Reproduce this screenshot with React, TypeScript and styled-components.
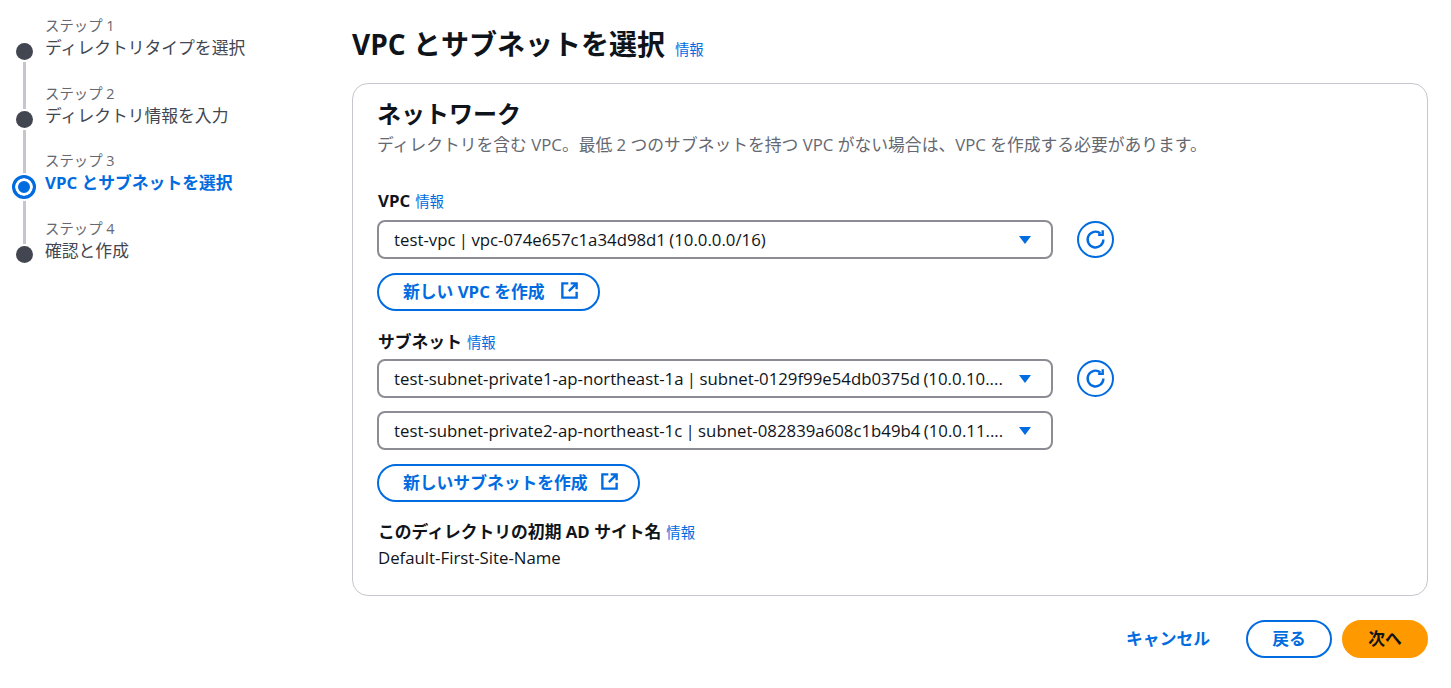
import React from "react";
import styled, { createGlobalStyle } from "styled-components";

const GlobalStyle = createGlobalStyle`
  html, body {
    margin: 0;
    padding: 0;
    background: #fff;
    font-family: "Open Sans", "Noto Sans CJK JP", sans-serif;
    color: #0f141a;
  }
`;

const Page = styled.div`
  width: 1451px;
  height: 688px;
  box-sizing: border-box;
  overflow: hidden;
  display: flex;
  padding: 17px 23px 0 12px;
`;

const Sidebar = styled.nav`
  width: 340px;
  flex: none;
  display: flex;
  flex-direction: column;
`;

const StepRow = styled.div`
  height: 67.5px;
  display: flex;
  gap: 9px;
`;

const Rail = styled.div`
  width: 24px;
  display: flex;
  flex-direction: column;
  align-items: center;
`;

const RailLine = styled.span<{ $height: number; $hidden?: boolean }>`
  width: 3px;
  height: ${(p) => p.$height}px;
  flex: ${(p) => (p.$height ? "none" : "1")};
  background: ${(p) => (p.$hidden ? "transparent" : "#c6c6cd")};
`;

const Dot = styled.span<{ $active?: boolean }>`
  box-sizing: border-box;
  flex: none;
  border-radius: 50%;
  position: relative;
  z-index: 1;
  width: ${(p) => (p.$active ? 24 : 17)}px;
  height: ${(p) => (p.$active ? 24 : 17)}px;
  background: ${(p) => (p.$active ? "#006ce0" : "#424650")};
  margin: ${(p) => (p.$active ? "-1.5px 0" : "2px 0")};
  ${(p) => p.$active && "border: 3px solid #006ce0; box-shadow: inset 0 0 0 3px #fff, 0 0 0 2px #fff;"}
`;

const StepText = styled.div`
  display: flex;
  flex-direction: column;
`;

const StepLabel = styled.span`
  font-size: 14.4px;
  line-height: 18px;
  color: #656871;
`;

const StepTitle = styled.span<{ $active?: boolean }>`
  font-size: 16.8px;
  line-height: 25px;
  color: ${(p) => (p.$active ? "#006ce0" : "#424650")};
  font-weight: ${(p) => (p.$active ? 700 : 400)};
`;

const Main = styled.main`
  flex: 1;
  display: flex;
  flex-direction: column;
`;

const HeadingRow = styled.div`
  display: flex;
  align-items: baseline;
  gap: 10px;
  height: 66px;
  padding-top: 7px;
  box-sizing: border-box;
`;

const Heading = styled.h1`
  margin: 0;
  font-size: 28px;
  line-height: 40px;
  font-weight: 700;
`;

const InfoLink = styled.a`
  font-size: 14.4px;
  font-weight: 400;
  color: #006ce0;
`;

const Card = styled.section`
  box-sizing: border-box;
  height: 513px;
  border: 1px solid #c6c6cd;
  border-radius: 16px;
  padding: 12px 24px 0;
  display: flex;
  flex-direction: column;
`;

const CardTitle = styled.h2`
  margin: 0 0 2px;
  font-size: 24px;
  line-height: 36px;
  font-weight: 700;
`;

const CardDescription = styled.p`
  margin: 0 0 35px;
  font-size: 16.8px;
  line-height: 21px;
  color: #656871;
`;

const FieldLabel = styled.div<{ $gap: number }>`
  display: flex;
  align-items: baseline;
  gap: 5px;
  padding-left: 1px;
  font-size: 16.8px;
  line-height: 22px;
  font-weight: 700;
  margin-bottom: ${(p) => p.$gap}px;
`;

const SelectRow = styled.div<{ $gap: number }>`
  display: flex;
  align-items: center;
  gap: 24px;
  margin-bottom: ${(p) => p.$gap}px;
`;

const Select = styled.div`
  box-sizing: border-box;
  width: 676px;
  height: 39px;
  border: 2px solid #8c8c94;
  border-radius: 8px;
  padding: 0 19px 0 15px;
  display: flex;
  align-items: center;
  justify-content: space-between;
  font-size: 16.8px;
  word-spacing: -1px;
  white-space: nowrap;
`;

const RefreshButton = styled.button`
  box-sizing: border-box;
  width: 37px;
  height: 37px;
  padding: 0;
  border: 2px solid #006ce0;
  border-radius: 50%;
  background: #fff;
  display: flex;
  align-items: center;
  justify-content: center;
`;

const PillButton = styled.button<{ $primary?: boolean; $withIcon?: boolean; $iconGap?: number }>`
  box-sizing: border-box;
  height: 38px;
  min-width: 86px;
  justify-content: center;
  padding: 0 ${(p) => (p.$withIcon ? 19 : 24)}px 3px 24px;
  border: 2px solid ${(p) => (p.$primary ? "#ff9900" : "#006ce0")};
  border-radius: 19px;
  background: ${(p) => (p.$primary ? "#ff9900" : "#fff")};
  color: ${(p) => (p.$primary ? "#0f141a" : "#006ce0")};
  font: 700 16.8px "Open Sans", "Noto Sans CJK JP", sans-serif;
  display: inline-flex;
  align-items: center;
  gap: ${(p) => p.$iconGap ?? 0}px;
`;

const CreateRow = styled.div<{ $gap: number }>`
  display: flex;
  margin-bottom: ${(p) => p.$gap}px;
`;

const SiteName = styled.div`
  padding-left: 1px;
  font-size: 16.8px;
  line-height: 22px;
`;

const Footer = styled.footer`
  display: flex;
  justify-content: flex-end;
  align-items: center;
  gap: 10px;
  margin-top: 24px;
`;

const CancelLink = styled.a`
  color: #006ce0;
  font-size: 16.8px;
  font-weight: 700;
  margin: 0 26px 3px 0;
`;

const steps = [
  { label: "ステップ 1", title: "ディレクトリタイプを選択" },
  { label: "ステップ 2", title: "ディレクトリ情報を入力" },
  { label: "ステップ 3", title: "VPC とサブネットを選択", active: true },
  { label: "ステップ 4", title: "確認と作成" },
];

const ExternalIcon = () => (
  <svg width="19" height="19" viewBox="0 0 16 16" fill="none" stroke="currentColor" strokeWidth="2">
    <path d="M7 2H2v12h12V9" />
    <path d="M9 2h5v5M14 2 7.5 8.5" />
  </svg>
);

const RefreshIcon = () => (
  <svg width="21" height="21" viewBox="0 0 16 16" fill="none" stroke="#006ce0" strokeWidth="1.8">
    <path d="M14 8a6 6 0 1 1-2.2-4.6" />
    <path d="M13.5 1v3.5H10" />
  </svg>
);

const CaretIcon = () => (
  <svg width="14" height="10" viewBox="0 0 14 10">
    <path d="M1 1h12L7 9z" fill="#006ce0" />
  </svg>
);

const App = () => (
  <>
    <GlobalStyle />
    <Page>
      <Sidebar>
        {steps.map((step, i) => (
          <StepRow key={step.label}>
            <Rail>
              <RailLine $height={24} $hidden={i === 0} />
              <Dot $active={step.active} />
              <RailLine $height={0} $hidden={i === steps.length - 1} />
            </Rail>
            <StepText>
              <StepLabel>{step.label}</StepLabel>
              <StepTitle $active={step.active}>{step.title}</StepTitle>
            </StepText>
          </StepRow>
        ))}
      </Sidebar>
      <Main>
        <HeadingRow>
          <Heading>VPC とサブネットを選択</Heading>
          <InfoLink>情報</InfoLink>
        </HeadingRow>
        <Card>
          <CardTitle>ネットワーク</CardTitle>
          <CardDescription>
            ディレクトリを含む VPC。最低 2 つのサブネットを持つ VPC がない場合は、VPC を作成する必要があります。
          </CardDescription>

          <FieldLabel $gap={7}>
            VPC <InfoLink>情報</InfoLink>
          </FieldLabel>
          <SelectRow $gap={14}>
            <Select>
              test-vpc | vpc-074e657c1a34d98d1 (10.0.0.0/16)
              <CaretIcon />
            </Select>
            <RefreshButton>
              <RefreshIcon />
            </RefreshButton>
          </SelectRow>
          <CreateRow $gap={20}>
            <PillButton $withIcon $iconGap={15}>
              新しい VPC を作成
              <ExternalIcon />
            </PillButton>
          </CreateRow>

          <FieldLabel $gap={5}>
            サブネット <InfoLink>情報</InfoLink>
          </FieldLabel>
          <SelectRow $gap={13}>
            <Select>
              test-subnet-private1-ap-northeast-1a | subnet-0129f99e54db0375d (10.0.10....
              <CaretIcon />
            </Select>
            <RefreshButton>
              <RefreshIcon />
            </RefreshButton>
          </SelectRow>
          <SelectRow $gap={14}>
            <Select>
              test-subnet-private2-ap-northeast-1c | subnet-082839a608c1b49b4 (10.0.11....
              <CaretIcon />
            </Select>
          </SelectRow>
          <CreateRow $gap={19}>
            <PillButton $withIcon $iconGap={12}>
              新しいサブネットを作成
              <ExternalIcon />
            </PillButton>
          </CreateRow>

          <FieldLabel $gap={3}>
            このディレクトリの初期 AD サイト名 <InfoLink>情報</InfoLink>
          </FieldLabel>
          <SiteName>Default-First-Site-Name</SiteName>
        </Card>
        <Footer>
          <CancelLink>キャンセル</CancelLink>
          <PillButton>戻る</PillButton>
          <PillButton $primary>次へ</PillButton>
        </Footer>
      </Main>
    </Page>
  </>
);

export default App;
